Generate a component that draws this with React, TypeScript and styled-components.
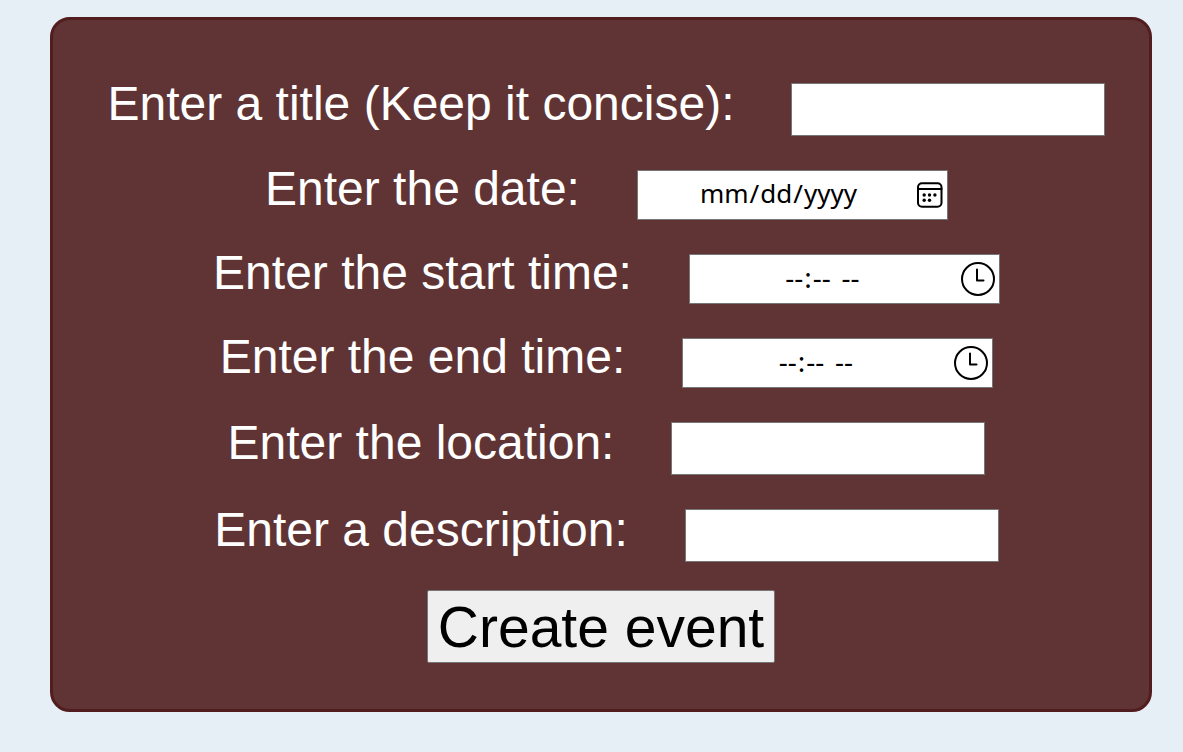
import React from "react";
import styled, { createGlobalStyle } from "styled-components";

const GlobalStyle = createGlobalStyle`
  body {
    margin: 0;
    background: #e7eff6;
    font-family: "Liberation Sans", Arial, sans-serif;
  }
`;

const Card = styled.form`
  display: flex;
  flex-direction: column;
  align-items: center;
  gap: 34px;
  margin: 17px 31px 40px 50px;
  padding: 63px 36px 46px;
  border: 3px solid #521d1f;
  border-radius: 20px;
  background: #603435;
`;

const Row = styled.div`
  display: flex;
  flex-wrap: wrap;
  align-items: center;
  justify-content: center;
  gap: 0 57px;
  padding-left: 11px;
`;

const Label = styled.label`
  padding-bottom: 12px;
  color: #fff;
  font-size: 48px;
  line-height: 36px;
`;

const Field = styled.span`
  position: relative;
  display: flex;
`;

const TextInput = styled.input`
  box-sizing: border-box;
  width: 314px;
  height: 53px;
  padding: 1px 2px;
  border: 1px solid #767676;
  border-radius: 0;
  background: #fff;
  color: #000;
  font-family: "Liberation Sans", Arial, sans-serif;
  font-size: 40px;
`;

const PickerInput = styled(TextInput)<{ $time: boolean }>`
  width: 311px;
  height: 50px;
  padding: 0 2px 4px;
  font-family: "Noto Sans", "Open Sans", sans-serif;
  font-size: ${(p) => (p.$time ? 28 : 26)}px;
  text-align: center;

  &::-webkit-calendar-picker-indicator {
    width: ${(p) => (p.$time ? 44 : 28)}px;
    height: 36px;
    margin: 0;
    padding: 0;
    opacity: 0;
  }

  &::-webkit-datetime-edit-ampm-field {
    padding-left: 5px;
  }
`;

const PickerIcon = styled.svg`
  position: absolute;
  top: 7px;
  right: 4px;
  width: 36px;
  height: 36px;
  fill: none;
  stroke: #000;
  stroke-width: 2;
  stroke-linecap: round;
  pointer-events: none;
`;

const SubmitButton = styled.button`
  height: 73px;
  margin-top: -6px;
  padding: 0 10px;
  border: 1px solid #767676;
  border-radius: 2px;
  background: #efefef;
  color: #000;
  font-family: "Liberation Sans", Arial, sans-serif;
  font-size: 57px;
  line-height: 64px;
`;

const CalendarIcon = () => (
  <PickerIcon viewBox="0 0 36 36" aria-hidden="true">
    <rect x="10" y="6.3" width="23.5" height="23.4" rx="4" />
    <path d="M10 12h23.5" />
    <g fill="#000" stroke="none">
      <circle cx="16.2" cy="18" r="1.7" />
      <circle cx="21.5" cy="18" r="1.7" />
      <circle cx="26.9" cy="18" r="1.7" />
      <circle cx="16.2" cy="23.3" r="1.7" />
      <circle cx="21.5" cy="23.3" r="1.7" />
    </g>
  </PickerIcon>
);

const ClockIcon = () => (
  <PickerIcon viewBox="0 0 36 36" aria-hidden="true">
    <circle cx="18" cy="18" r="16" />
    <path d="M17 8.5v11h6.5" strokeLinejoin="round" />
  </PickerIcon>
);

type FieldType = "text" | "date" | "time";

const fields: { id: string; label: string; type: FieldType }[] = [
  { id: "title", label: "Enter a title (Keep it concise):", type: "text" },
  { id: "date", label: "Enter the date:", type: "date" },
  { id: "start", label: "Enter the start time:", type: "time" },
  { id: "end", label: "Enter the end time:", type: "time" },
  { id: "location", label: "Enter the location:", type: "text" },
  { id: "description", label: "Enter a description:", type: "text" },
];

export default function App() {
  return (
    <>
      <GlobalStyle />
      <Card onSubmit={(e) => e.preventDefault()}>
        {fields.map(({ id, label, type }) => (
          <Row key={id}>
            <Label htmlFor={id}>{label}</Label>
            {type === "text" ? (
              <TextInput id={id} name={id} type="text" />
            ) : (
              <Field>
                <PickerInput
                  id={id}
                  name={id}
                  type={type}
                  $time={type === "time"}
                />
                {type === "date" ? <CalendarIcon /> : <ClockIcon />}
              </Field>
            )}
          </Row>
        ))}
        <SubmitButton type="submit">Create event</SubmitButton>
      </Card>
    </>
  );
}
